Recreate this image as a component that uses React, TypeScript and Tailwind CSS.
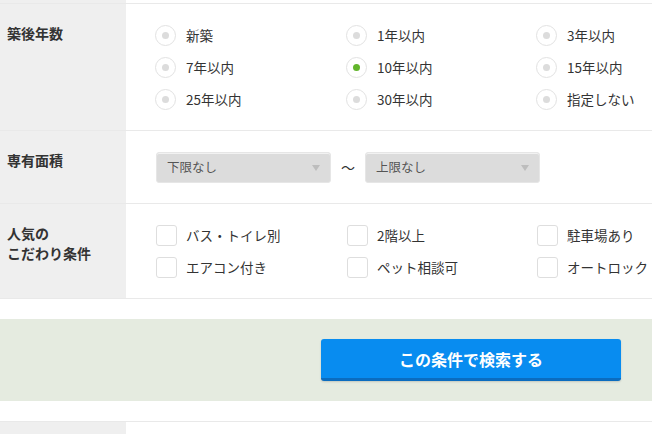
import React from "react";

const years = [
  "新築",
  "1年以内",
  "3年以内",
  "7年以内",
  "10年以内",
  "15年以内",
  "25年以内",
  "30年以内",
  "指定しない",
];

const features = ["バス・トイレ別", "2階以上", "駐車場あり", "エアコン付き", "ペット相談可", "オートロック"];

function Radio({ label, checked }: { label: string; checked?: boolean }) {
  return (
    <label className="flex h-[32px] items-center gap-[10px]">
      <span className="flex h-[21px] w-[21px] items-center justify-center rounded-full border border-[#e2e2e2] bg-white">
        <span className={`h-[7px] w-[7px] rounded-full ${checked ? "bg-[#62b52b]" : "bg-[#dcdcdc]"}`} />
      </span>
      <span className="text-[13.5px]">{label}</span>
    </label>
  );
}

function Check({ label }: { label: string }) {
  return (
    <label className="flex h-[32px] items-center gap-[9px]">
      <span className="ml-[1px] h-[21px] w-[21px] rounded-[3px] border border-[#dedede] bg-white" />
      <span className="text-[13.5px]">{label}</span>
    </label>
  );
}

function Select({ label }: { label: string }) {
  return (
    <div className="flex h-[31px] w-[175px] items-center justify-between rounded-[3px] border border-[#e6e6e6] bg-[#dcdcdc] pl-[10px] pr-[10px] shadow-[inset_0_1px_0_#f2f2f2]">
      <span className="text-[12.5px] text-[#555]">{label}</span>
      <span className="h-0 w-0 border-x-[4px] border-t-[6px] border-x-transparent border-t-[#bdbdbd]" />
    </div>
  );
}

function Label({ children }: { children: React.ReactNode }) {
  return (
    <div className="w-[126px] shrink-0 bg-[#efefef] pl-[7px] pt-[19px] text-[14px] font-bold leading-[20px]">
      {children}
    </div>
  );
}

export default function App() {
  return (
    <div className="h-[434px] w-[652px] overflow-hidden bg-white font-['Noto_Sans_CJK_JP',sans-serif] text-[#333]">
      <div className="flex h-[4px] border-b border-[#e9e9e9]">
        <div className="w-[126px] bg-[#efefef]" />
      </div>

      <div className="flex border-b border-[#e9e9e9]">
        <Label>築後年数</Label>
        <div className="grid flex-1 grid-cols-[191px_190px_1fr] py-[15px] pl-[29px]">
          {years.map((y) => (
            <Radio key={y} label={y} checked={y === "10年以内"} />
          ))}
        </div>
      </div>

      <div className="flex border-b border-[#e9e9e9]">
        <Label>専有面積</Label>
        <div className="flex flex-1 items-center gap-[10px] pb-[20px] pl-[30px] pt-[21px]">
          <Select label="下限なし" />
          <span className="w-[14px] text-[14px]">〜</span>
          <Select label="上限なし" />
        </div>
      </div>

      <div className="flex border-b border-[#e9e9e9]">
        <Label>
          人気の
          <br />
          こだわり条件
        </Label>
        <div className="grid flex-1 grid-cols-[191px_190px_1fr] py-[15px] pl-[29px] whitespace-nowrap">
          {features.map((f) => (
            <Check key={f} label={f} />
          ))}
        </div>
      </div>

      <div className="mt-[20px] flex h-[82px] items-center justify-end bg-[#e5ebe0] pr-[31px]">
        <button className="h-[42px] w-[300px] rounded-[3px] border-b-[3px] border-[#0b6cbf] bg-[#088cf0] text-[16px] font-bold text-white shadow-[0_1px_2px_rgba(0,0,0,0.15)]">
          この条件で検索する
        </button>
      </div>

      <div className="mt-[20px] flex h-[20px] border-t border-[#e9e9e9]">
        <div className="w-[126px] bg-[#efefef]" />
      </div>
    </div>
  );
}
